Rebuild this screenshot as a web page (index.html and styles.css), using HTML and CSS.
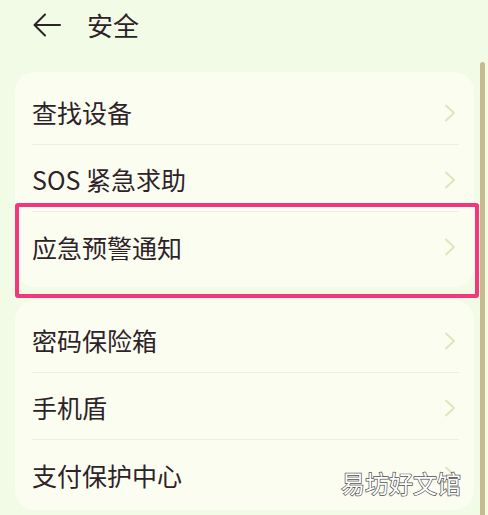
FILE: index.html
```html
<!DOCTYPE html>
<html lang="zh-CN">
<head>
<meta charset="utf-8">
<title>安全</title>
<link rel="stylesheet" href="styles.css">
</head>
<body>
<div class="page">
  <header class="topbar">
    <svg class="back" width="28" height="24" viewBox="0 0 28 24" aria-hidden="true">
      <path d="M27 12 H2 M12 1.5 L1.5 12 L12 22.5" fill="none" stroke="#2e2229" stroke-width="2" stroke-linecap="round" stroke-linejoin="round"/>
    </svg>
    <h1 class="title">安全</h1>
  </header>

  <section class="card">
    <div class="row"><span class="label">查找设备</span><svg class="chev" width="12" height="18" viewBox="0 0 12 18"><path d="M2 1.5 L10 9 L2 16.5" fill="none" stroke="#dde5ba" stroke-width="1.8" stroke-linecap="round" stroke-linejoin="round"/></svg></div>
    <div class="row"><span class="label">SOS 紧急求助</span><svg class="chev" width="12" height="18" viewBox="0 0 12 18"><path d="M2 1.5 L10 9 L2 16.5" fill="none" stroke="#dde5ba" stroke-width="1.8" stroke-linecap="round" stroke-linejoin="round"/></svg></div>
    <div class="row"><span class="label">应急预警通知</span><svg class="chev" width="12" height="18" viewBox="0 0 12 18"><path d="M2 1.5 L10 9 L2 16.5" fill="none" stroke="#dde5ba" stroke-width="1.8" stroke-linecap="round" stroke-linejoin="round"/></svg></div>
  </section>

  <section class="card card-second">
    <div class="row"><span class="label">密码保险箱</span><svg class="chev" width="12" height="18" viewBox="0 0 12 18"><path d="M2 1.5 L10 9 L2 16.5" fill="none" stroke="#dde5ba" stroke-width="1.8" stroke-linecap="round" stroke-linejoin="round"/></svg></div>
    <div class="row"><span class="label">手机盾</span><svg class="chev" width="12" height="18" viewBox="0 0 12 18"><path d="M2 1.5 L10 9 L2 16.5" fill="none" stroke="#dde5ba" stroke-width="1.8" stroke-linecap="round" stroke-linejoin="round"/></svg></div>
    <div class="row"><span class="label">支付保护中心</span><svg class="chev" width="12" height="18" viewBox="0 0 12 18"><path d="M2 1.5 L10 9 L2 16.5" fill="none" stroke="#dde5ba" stroke-width="1.8" stroke-linecap="round" stroke-linejoin="round"/></svg></div>
  </section>

  <div class="highlight"></div>
  <div class="scrollbar"></div>
  <div class="watermark">易坊好文馆</div>
</div>
</body>
</html>
```

FILE: styles.css
```css
html, body {
  margin: 0;
  padding: 0;
  background: #f2fbe6;
}

.page {
  position: relative;
  width: 488px;
  height: 515px;
  overflow: hidden;
  background: #f2fbe6;
  font-family: "Noto Sans CJK SC", "Noto Sans", sans-serif;
  color: #2e2229;
}

.topbar {
  display: flex;
  align-items: center;
  height: 50px;
  padding-left: 33px;
  gap: 26px;
}

.back {
  display: block;
}

.title {
  margin: 0;
  font-size: 26px;
  font-weight: 400;
  line-height: 1;
  color: #2e2229;
}

.card {
  margin: 22px 14px 0 15px;
  padding: 6px 15px 8px 17px;
  background: #fbfdf1;
  border-radius: 20px;
}

.card-second {
  margin-top: 13px;
  padding-bottom: 3px;
}

.row {
  display: flex;
  align-items: center;
  justify-content: space-between;
  box-sizing: border-box;
  height: 67px;
  padding-top: 3px;
  padding-right: 3px;
  border-bottom: 1px solid #eef2dd;
}

.row:last-child {
  border-bottom: none;
}

.label {
  font-size: 25px;
  line-height: 1;
  color: #2e2229;
}

.chev {
  display: block;
}

.highlight {
  position: absolute;
  left: 15px;
  top: 203px;
  width: 464px;
  height: 95px;
  box-sizing: border-box;
  border: 4px solid #f2377d;
  border-radius: 3px;
}

.scrollbar {
  position: absolute;
  left: 480px;
  top: 62px;
  width: 5px;
  height: 460px;
  background: #c6ba8f;
  border-radius: 3px 3px 0 0;
}

.watermark {
  position: absolute;
  left: 341px;
  top: 468px;
  font-family: "Noto Sans CJK SC", sans-serif;
  font-size: 24px;
  line-height: 30px;
  color: #ffffff;
  -webkit-text-stroke: 1.4px #505050;
  paint-order: stroke fill;
}
```
